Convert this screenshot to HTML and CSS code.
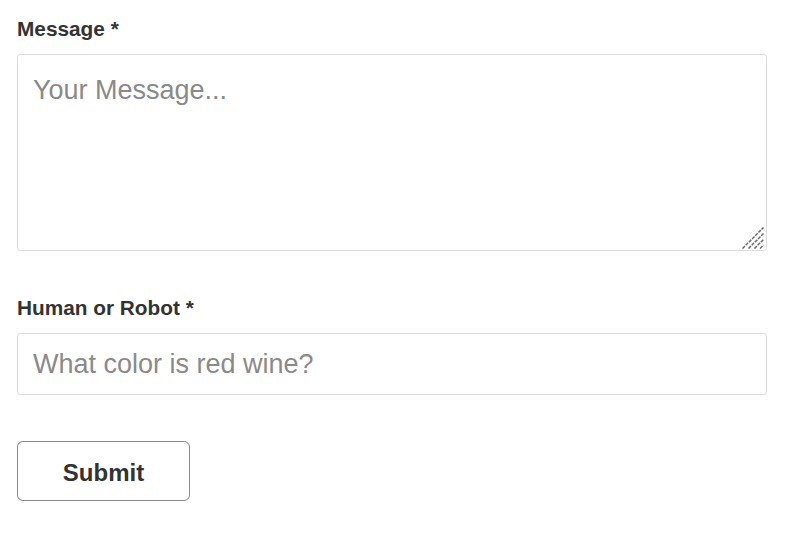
FILE: index.html
```html
<!DOCTYPE html>
<html>
<head>
<meta charset="utf-8">
<link rel="stylesheet" href="styles.css">
</head>
<body>
<form class="contact-form">
  <div class="field">
    <label class="field-label" for="message">Message *</label>
    <div class="textarea-wrap">
      <textarea id="message" class="field-textarea" placeholder="Your Message..."></textarea>
      <svg class="resize-grip" width="22" height="22" viewBox="0 0 22 22" aria-hidden="true">
        <g stroke="#6e6e6e" stroke-width="1.5" stroke-dasharray="3.5 1" fill="none">
          <line x1="0.5" y1="21.5" x2="21.5" y2="0.5"/>
          <line x1="6.5" y1="21.5" x2="21.5" y2="6.5"/>
          <line x1="12.5" y1="21.5" x2="21.5" y2="12.5"/>
          <line x1="18" y1="21.5" x2="21.5" y2="18"/>
        </g>
      </svg>
    </div>
  </div>
  <div class="field">
    <label class="field-label" for="human">Human or Robot *</label>
    <input id="human" class="field-input" type="text" placeholder="What color is red wine?">
  </div>
  <div class="actions">
    <button type="button" class="submit-btn">Submit</button>
  </div>
</form>
</body>
</html>
```

FILE: styles.css
```css
html, body {
  margin: 0;
  padding: 0;
  background: #ffffff;
}

body {
  font-family: "Liberation Sans", Arial, sans-serif;
  color: #333333;
}

.contact-form {
  display: flex;
  flex-direction: column;
  gap: 45px;
  padding: 17px 25px 0 17px;
}

.field {
  display: flex;
  flex-direction: column;
  gap: 13px;
}

.field-label {
  font-size: 20.8px;
  line-height: 24px;
  font-weight: bold;
  color: #333333;
}

.textarea-wrap {
  position: relative;
  width: 750px;
  height: 197px;
}

.field-textarea,
.field-input {
  box-sizing: border-box;
  width: 750px;
  margin: 0;
  border: 1px solid #dddddd;
  border-radius: 3px;
  font-family: "Liberation Sans", Arial, sans-serif;
  font-size: 27px;
  color: #333333;
  background: #ffffff;
  outline: none;
}

.field-textarea {
  display: block;
  height: 197px;
  padding: 20px 15px;
  line-height: normal;
  resize: none;
}

.resize-grip {
  position: absolute;
  right: 3px;
  bottom: 2px;
  pointer-events: none;
}

.field-input {
  height: 62px;
  padding: 0 15px;
}

.field-textarea::placeholder,
.field-input::placeholder {
  color: #8a8a8a;
  opacity: 1;
}

.actions {
  display: flex;
  margin-top: 1px;
}

.submit-btn {
  box-sizing: border-box;
  width: 173px;
  height: 60px;
  border: 1px solid #8a8a8a;
  border-radius: 6px;
  background: #ffffff;
  font-family: "Liberation Sans", Arial, sans-serif;
  font-size: 24px;
  font-weight: bold;
  color: #333333;
  padding: 3px 0 0 0;
  cursor: pointer;
}
```
